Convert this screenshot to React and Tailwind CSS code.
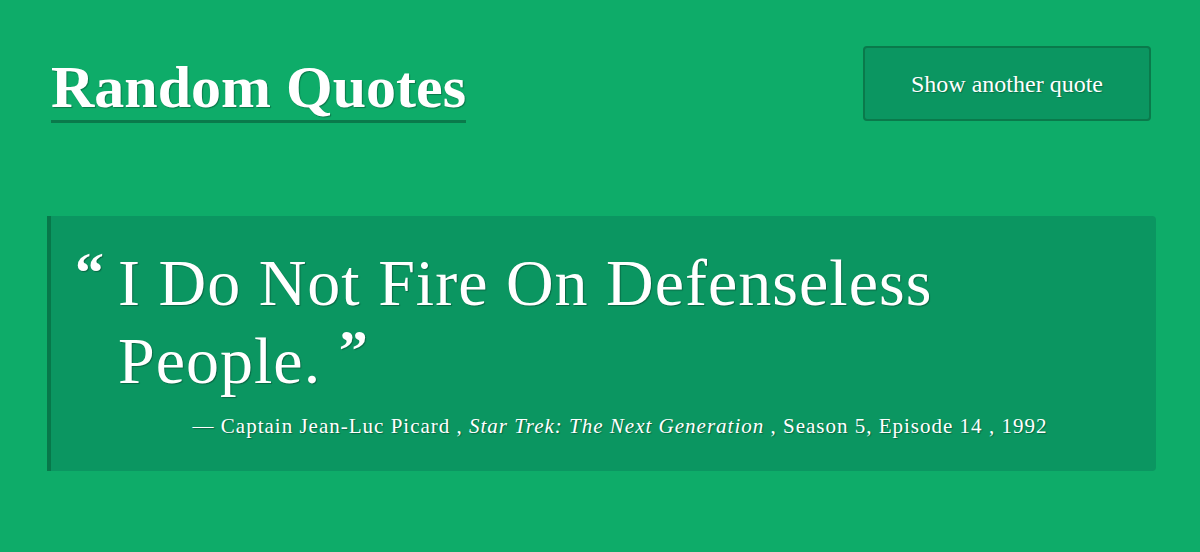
const serif = { fontFamily: '"Liberation Serif", "Times New Roman", serif' }

function Header({ onNext }) {
  return (
    <header className="flex items-start justify-between pl-[51px] pr-[49px] pt-[46px]">
      <h1 className="mt-[11px] border-b-[3px] border-[#0a7a4b] pb-[3px] text-[60px] font-bold leading-none text-white [text-shadow:1px_1px_1px_rgba(0,0,0,0.3)]">
        Random Quotes
      </h1>
      <button
        onClick={onNext}
        className="h-[75px] w-[288px] rounded-[4px] border-2 border-[#0a7a4b] bg-[#0b9661] text-[24px] text-white [text-shadow:1px_1px_1px_rgba(0,0,0,0.25)]"
      >
        Show another quote
      </button>
    </header>
  )
}

function QuoteCard({ quote }) {
  return (
    <section className="ml-[47px] mr-[44px] mt-[93px] flex rounded-r-[4px] border-l-4 border-[#07784a] bg-[#0b9661] pb-[31px] pl-6 pr-[34px] pt-[28px] text-white [text-shadow:1px_1px_1px_rgba(0,0,0,0.3)]">
      <span className="mt-0 w-[43px] shrink-0 text-[58px] font-bold leading-none">“</span>
      <div className="flex-1">
        <p className="max-w-[900px] text-[66px] leading-[78px] tracking-[1px]">
          {quote.text} <span className="align-top text-[58px] font-bold leading-none">”</span>
        </p>
        <p className="mt-3 text-center text-[21px] leading-[28px] tracking-[1px]">
          — {quote.author} , <i>{quote.source}</i> , {quote.episode} , {quote.year}
        </p>
      </div>
    </section>
  )
}

export default function App() {
  const quote = {
    text: 'I Do Not Fire On Defenseless People.',
    author: 'Captain Jean-Luc Picard',
    source: 'Star Trek: The Next Generation',
    episode: 'Season 5, Episode 14',
    year: '1992',
  }

  return (
    <div className="h-[552px] w-full overflow-hidden bg-[#0eac69]" style={serif}>
      <Header onNext={() => {}} />
      <QuoteCard quote={quote} />
    </div>
  )
}
